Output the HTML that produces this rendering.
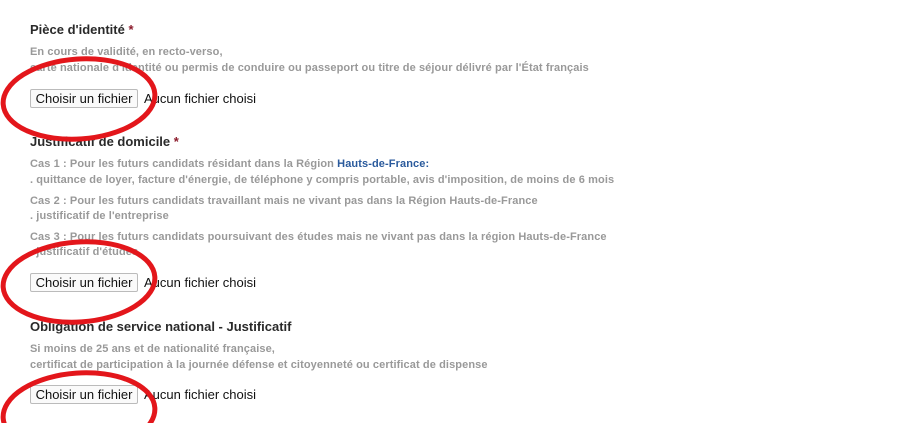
<!DOCTYPE html>
<html><head><meta charset="utf-8"><style>
html,body{margin:0;width:919px;height:423px;overflow:hidden}
body{background:#fff;position:relative;font-family:"Liberation Sans",sans-serif}
.t{position:absolute;left:30px;font-size:13px;font-weight:bold;color:#2a2a2a;white-space:nowrap;line-height:16px}
.t b{color:#8b1a2b}
.d{position:absolute;left:30px;font-size:11px;font-weight:bold;color:#999;white-space:nowrap;line-height:14px;letter-spacing:0.1px}
.d span{color:#2a5a9c}
.btn{position:absolute;left:30px;width:106px;height:17px;border:1px solid #bbb;border-radius:2px;background:#fafafa;font-size:13px;color:#111;line-height:17px;text-align:center}
.nf{position:absolute;left:144px;font-size:13px;color:#111;line-height:17px}
svg{position:absolute;left:0;top:0}
</style></head><body>
<div class="t" style="top:22px">Pièce d'identité <b>*</b></div>
<div class="d" style="top:45px">En cours de validité, en recto-verso,</div>
<div class="d" style="top:61px">carte nationale d'identité ou permis de conduire ou passeport ou titre de séjour délivré par l'État français</div>
<div class="btn" style="top:89px">Choisir un fichier</div><div class="nf" style="top:90px">Aucun fichier choisi</div>

<div class="t" style="top:134px">Justificatif de domicile <b>*</b></div>
<div class="d" style="top:157px">Cas 1 : Pour les futurs candidats résidant dans la Région <span>Hauts-de-France:</span></div>
<div class="d" style="top:173px">. quittance de loyer, facture d'énergie, de téléphone y compris portable, avis d'imposition, de moins de 6 mois</div>
<div class="d" style="top:194px">Cas 2 : Pour les futurs candidats travaillant mais ne vivant pas dans la Région Hauts-de-France</div>
<div class="d" style="top:209px">. justificatif de l'entreprise</div>
<div class="d" style="top:230px">Cas 3 : Pour les futurs candidats poursuivant des études mais ne vivant pas dans la région Hauts-de-France</div>
<div class="d" style="top:245px">. justificatif d'études</div>
<div class="btn" style="top:273px">Choisir un fichier</div><div class="nf" style="top:274px">Aucun fichier choisi</div>

<div class="t" style="top:319px">Obligation de service national - Justificatif</div>
<div class="d" style="top:342px">Si moins de 25 ans et de nationalité française,</div>
<div class="d" style="top:358px">certificat de participation à la journée défense et citoyenneté ou certificat de dispense</div>
<div class="btn" style="top:385px">Choisir un fichier</div><div class="nf" style="top:386px">Aucun fichier choisi</div>

<svg width="919" height="423" viewBox="0 0 919 423"><g fill="none" stroke="#e3161b" stroke-width="5">
<ellipse cx="79" cy="99" rx="76" ry="40" transform="rotate(-4 79 99)"/>
<ellipse cx="79" cy="282" rx="76" ry="40" transform="rotate(-4 79 282)"/>
<ellipse cx="79" cy="413" rx="76" ry="40" transform="rotate(-4 79 413)"/>
</g></svg>
</body></html>
